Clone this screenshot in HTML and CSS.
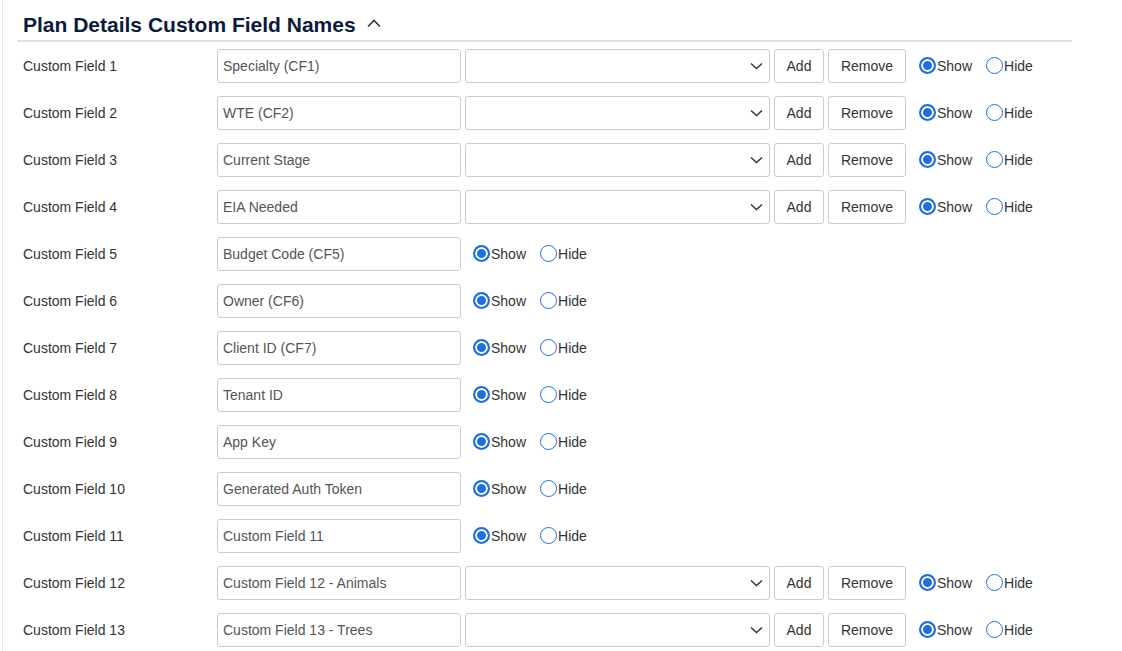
FILE: index.html
```html
<!DOCTYPE html>
<html lang="en">
<head>
    <meta charset="UTF-8">
    <title>Plan Details Custom Field Names</title>
    <link rel="stylesheet" href="styles.css">
</head>
<body>
    <div class="page">
        <div class="section">
            <!--标题-->
            <div class="title">
                <h2>Plan Details Custom Field Names</h2>
                <svg class="caret" width="16" height="10" viewBox="0 0 16 10"><path d="M2 8.5 L8 2.5 L14 8.5" fill="none" stroke="#333" stroke-width="1.6"/></svg>
            </div>
            <!--字段列表-->
            <div class="rows">
                <div class="row">
                    <span class="label">Custom Field 1</span>
                    <div class="text-input">Specialty (CF1)</div>
                    <div class="select"><svg width="13" height="8" viewBox="0 0 13 8"><path d="M1 1.5 L6.5 6.5 L12 1.5" fill="none" stroke="#333" stroke-width="1.5"/></svg></div>
                    <span class="btn add">Add</span>
                    <span class="btn remove">Remove</span>
                    <div class="radios">
                        <span class="radio checked"><i></i>Show</span>
                        <span class="radio"><i></i>Hide</span>
                    </div>
                </div>
                <div class="row">
                    <span class="label">Custom Field 2</span>
                    <div class="text-input">WTE (CF2)</div>
                    <div class="select"><svg width="13" height="8" viewBox="0 0 13 8"><path d="M1 1.5 L6.5 6.5 L12 1.5" fill="none" stroke="#333" stroke-width="1.5"/></svg></div>
                    <span class="btn add">Add</span>
                    <span class="btn remove">Remove</span>
                    <div class="radios">
                        <span class="radio checked"><i></i>Show</span>
                        <span class="radio"><i></i>Hide</span>
                    </div>
                </div>
                <div class="row">
                    <span class="label">Custom Field 3</span>
                    <div class="text-input">Current Stage</div>
                    <div class="select"><svg width="13" height="8" viewBox="0 0 13 8"><path d="M1 1.5 L6.5 6.5 L12 1.5" fill="none" stroke="#333" stroke-width="1.5"/></svg></div>
                    <span class="btn add">Add</span>
                    <span class="btn remove">Remove</span>
                    <div class="radios">
                        <span class="radio checked"><i></i>Show</span>
                        <span class="radio"><i></i>Hide</span>
                    </div>
                </div>
                <div class="row">
                    <span class="label">Custom Field 4</span>
                    <div class="text-input">EIA Needed</div>
                    <div class="select"><svg width="13" height="8" viewBox="0 0 13 8"><path d="M1 1.5 L6.5 6.5 L12 1.5" fill="none" stroke="#333" stroke-width="1.5"/></svg></div>
                    <span class="btn add">Add</span>
                    <span class="btn remove">Remove</span>
                    <div class="radios">
                        <span class="radio checked"><i></i>Show</span>
                        <span class="radio"><i></i>Hide</span>
                    </div>
                </div>
                <div class="row">
                    <span class="label">Custom Field 5</span>
                    <div class="text-input">Budget Code (CF5)</div>
                    <div class="radios short">
                        <span class="radio checked"><i></i>Show</span>
                        <span class="radio"><i></i>Hide</span>
                    </div>
                </div>
                <div class="row">
                    <span class="label">Custom Field 6</span>
                    <div class="text-input">Owner (CF6)</div>
                    <div class="radios short">
                        <span class="radio checked"><i></i>Show</span>
                        <span class="radio"><i></i>Hide</span>
                    </div>
                </div>
                <div class="row">
                    <span class="label">Custom Field 7</span>
                    <div class="text-input">Client ID (CF7)</div>
                    <div class="radios short">
                        <span class="radio checked"><i></i>Show</span>
                        <span class="radio"><i></i>Hide</span>
                    </div>
                </div>
                <div class="row">
                    <span class="label">Custom Field 8</span>
                    <div class="text-input">Tenant ID</div>
                    <div class="radios short">
                        <span class="radio checked"><i></i>Show</span>
                        <span class="radio"><i></i>Hide</span>
                    </div>
                </div>
                <div class="row">
                    <span class="label">Custom Field 9</span>
                    <div class="text-input">App Key</div>
                    <div class="radios short">
                        <span class="radio checked"><i></i>Show</span>
                        <span class="radio"><i></i>Hide</span>
                    </div>
                </div>
                <div class="row">
                    <span class="label">Custom Field 10</span>
                    <div class="text-input">Generated Auth Token</div>
                    <div class="radios short">
                        <span class="radio checked"><i></i>Show</span>
                        <span class="radio"><i></i>Hide</span>
                    </div>
                </div>
                <div class="row">
                    <span class="label">Custom Field 11</span>
                    <div class="text-input">Custom Field 11</div>
                    <div class="radios short">
                        <span class="radio checked"><i></i>Show</span>
                        <span class="radio"><i></i>Hide</span>
                    </div>
                </div>
                <div class="row">
                    <span class="label">Custom Field 12</span>
                    <div class="text-input">Custom Field 12 - Animals</div>
                    <div class="select"><svg width="13" height="8" viewBox="0 0 13 8"><path d="M1 1.5 L6.5 6.5 L12 1.5" fill="none" stroke="#333" stroke-width="1.5"/></svg></div>
                    <span class="btn add">Add</span>
                    <span class="btn remove">Remove</span>
                    <div class="radios">
                        <span class="radio checked"><i></i>Show</span>
                        <span class="radio"><i></i>Hide</span>
                    </div>
                </div>
                <div class="row">
                    <span class="label">Custom Field 13</span>
                    <div class="text-input">Custom Field 13 - Trees</div>
                    <div class="select"><svg width="13" height="8" viewBox="0 0 13 8"><path d="M1 1.5 L6.5 6.5 L12 1.5" fill="none" stroke="#333" stroke-width="1.5"/></svg></div>
                    <span class="btn add">Add</span>
                    <span class="btn remove">Remove</span>
                    <div class="radios">
                        <span class="radio checked"><i></i>Show</span>
                        <span class="radio"><i></i>Hide</span>
                    </div>
                </div>
            </div>
        </div>
    </div>
</body>
</html>
```

FILE: styles.css
```css
*{
    padding: 0;
    margin: 0;
    box-sizing: border-box;
}
body{
    background-color: #fff;
    font-family: "Liberation Sans", Arial, sans-serif;
    font-size: 14px;
    color: #333;
    overflow: hidden;
}
.page{
    margin-left: 2px;
    border-left: 1px solid #e6e6e6;
    min-height: 651px;
}
.section{
    margin-left: 14px;
    width: 1055px;
}
/*标题*/
.title{
    display: flex;
    align-items: center;
    height: 42px;
    padding: 10px 6px 0;
    border-bottom: 2px solid #e0e0e0;
}
.title h2{
    font-size: 21px;
    font-weight: bold;
    color: #0b1a3c;
}
.title .caret{
    margin-left: 10px;
    margin-top: -4px;
}
/*行*/
.row{
    display: flex;
    align-items: center;
    height: 47px;
    padding-left: 6px;
}
.row .label{
    width: 194px;
    color: #333;
}
.text-input{
    display: flex;
    align-items: center;
    width: 244px;
    height: 34px;
    padding: 0 5px;
    border: 1px solid #ccc;
    border-radius: 3px;
    color: #555;
}
.select{
    display: flex;
    align-items: center;
    justify-content: flex-end;
    width: 305px;
    height: 34px;
    margin-left: 4px;
    padding-right: 6px;
    border: 1px solid #ccc;
    border-radius: 3px;
}
.btn{
    display: flex;
    align-items: center;
    justify-content: center;
    height: 34px;
    margin-left: 4px;
    border: 1px solid #ccc;
    border-radius: 3px;
    background-color: #fff;
    color: #333;
}
.btn.add{
    width: 50px;
}
.btn.remove{
    width: 78px;
}
/*单选*/
.radios{
    display: flex;
    align-items: center;
    margin-left: 13px;
}
.radios.short{
    margin-left: 12px;
}
.radio{
    display: flex;
    align-items: center;
    margin-right: 14px;
    color: #333;
}
.radio i{
    display: inline-block;
    width: 17px;
    height: 17px;
    margin-right: 1px;
    border: 1.5px solid #1f6fe0;
    border-radius: 50%;
}
.radio.checked i{
    border: 2px solid #1f6fe0;
    background-color: #1f6fe0;
    box-shadow: inset 0 0 0 2px #fff;
}
```
